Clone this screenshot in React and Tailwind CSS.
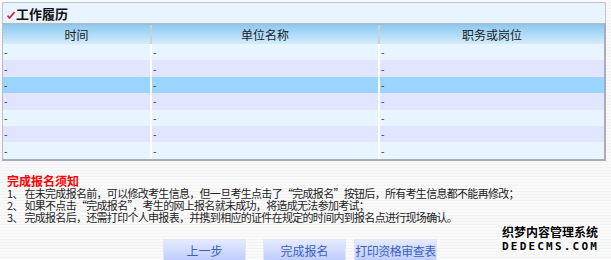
import React from 'react';

const rows = [
  { bg: 'bg-[#e8f4ff]' },
  { bg: 'bg-[#e1e5ff]' },
  { bg: 'bg-[#99d5ff]' },
  { bg: 'bg-[#e1e5ff]' },
  { bg: 'bg-[#e8f4ff]' },
  { bg: 'bg-[#e1e5ff]' },
  { bg: 'bg-[#e8f4ff]' },
];

const notes = [
  '1、 在未完成报名前，可以修改考生信息，但一旦考生点击了“完成报名”按钮后，所有考生信息都不能再修改；',
  '2、 如果不点击“完成报名”，考生的网上报名就未成功，将造成无法参加考试；',
  '3、 完成报名后，还需打印个人申报表，并携到相应的证件在规定的时间内到报名点进行现场确认。',
];

const Button = ({ children, className = '' }) => (
  <button
    className={`h-[24px] w-[83px] border border-[#dfe6f6] bg-gradient-to-b from-[#e4eaff] to-[#bccbff] text-[12px] text-[#3b5fc0] leading-none ${className}`}
  >
    {children}
  </button>
);

export default function App() {
  return (
    <div
      className="relative w-[611px] h-[260px] overflow-hidden bg-[repeating-linear-gradient(to_bottom,#fafafa_0px,#fafafa_2px,#f3f3f3_2px,#f3f3f3_3px)] text-[#222]"
      style={{ fontFamily: '"Noto Sans CJK SC", "DejaVu Sans", sans-serif' }}
    >
      <div className="pt-[2px] pl-[2px] w-[606px]">
        <div className="border border-[#b9c6d6] border-b-0 bg-[#e8f4ff] h-[21px] flex items-center pl-[4px]">
          <svg width="8" height="8" viewBox="0 0 8 8" className="mt-[3px]">
            <path d="M0.5 4.5 L2.5 7 L7.5 1" stroke="#e0203c" strokeWidth="1.8" fill="none" />
          </svg>
          <span className="text-[13px] font-bold leading-none ml-[1px] text-[#111]">工作履历</span>
        </div>
        <div className="border-t-2 border-[#a9bcd3] border-l border-r-2 border-b-2 border-l-[#b8bcc8] border-r-[#a8abb8] border-b-[#a8abb8]">
          <div className="grid grid-cols-[149px_228px_1fr] h-[19px] bg-gradient-to-b from-[#8ccaf3] to-[#d3ecfc] text-[12px] leading-none">
            <div className="flex items-center justify-center border-r-2 border-[#c8d2dc]">时间</div>
            <div className="flex items-center justify-center border-r-2 border-[#c8d2dc]">单位名称</div>
            <div className="flex items-center justify-center">职务或岗位</div>
          </div>
          {rows.map((r, i) => (
            <div
              key={i}
              className={`grid grid-cols-[149px_228px_1fr] h-[16.4px] ${r.bg} text-[10px] leading-none`}
            >
              <div className="flex items-center pl-[1px] border-r-2 border-white">-</div>
              <div className="flex items-center pl-[1px] border-r-2 border-white">-</div>
              <div className="flex items-center pl-[1px]">-</div>
            </div>
          ))}
        </div>
      </div>

      <div className="mt-[13px] pl-[7px] text-[11px] leading-[12px]">
        <div className="text-[#ff0000] font-bold text-[12px] leading-[13px]">完成报名须知</div>
        {notes.map((n, i) => (
          <div key={i} className="tracking-[-0.7px] whitespace-nowrap h-[12px] leading-[12px]">{n}</div>
        ))}
      </div>

      <div className="flex mt-[16px] pl-[163px]">
        <Button>上一步</Button>
        <Button className="ml-[17px]">完成报名</Button>
        <Button className="ml-[8px] tracking-[-0.5px]">打印资格审查表</Button>
      </div>

      <div className="absolute left-[502px] top-[226px] text-black font-bold leading-none [text-shadow:1px_0_#fff,-1px_0_#fff,0_1px_#fff,0_-1px_#fff,1px_1px_#fff,-1px_-1px_#fff,1px_-1px_#fff,-1px_1px_#fff]">
        <div className="text-[12px]">织梦内容管理系统</div>
        <div className="text-[11px] tracking-[2.2px] mt-[3px]" style={{ fontFamily: '"DejaVu Sans Mono", monospace' }}>DEDECMS.COM</div>
      </div>
    </div>
  );
}
